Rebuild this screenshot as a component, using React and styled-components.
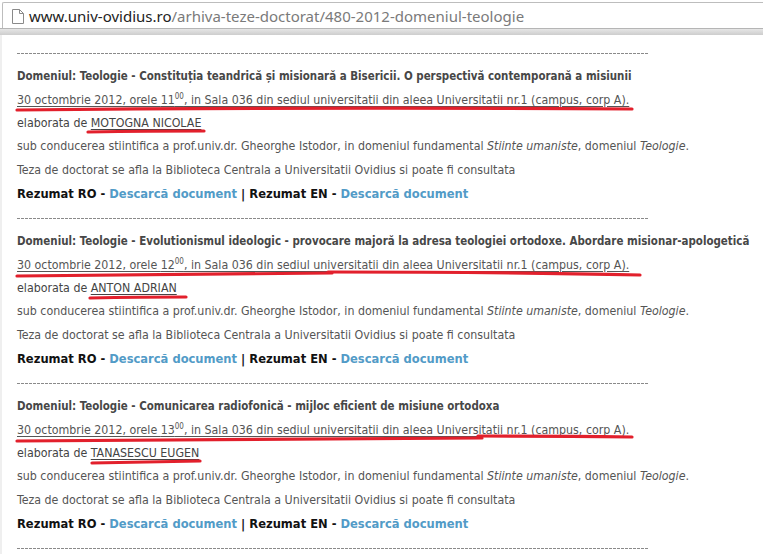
import React from "react";
import styled, { createGlobalStyle } from "styled-components";

const GlobalStyle = createGlobalStyle`
  html, body { margin: 0; padding: 0; background: #fff; }
  body { font-family: "DejaVu Sans", "Liberation Sans", sans-serif; }
`;

const Page = styled.div`
  width: 763px;
  height: 554px;
  overflow: hidden;
  background: #fff;
`;

const AddressBar = styled.div`
  height: 28px;
  padding: 2px 0 0 2px;
  box-sizing: border-box;
  background: #fff;
`;

const UrlBox = styled.div`
  height: 26px;
  border: 1px solid #bdbdbd;
  border-right: none;
  border-bottom: none;
  border-radius: 2px 0 0 0;
  display: flex;
  align-items: center;
  gap: 5px;
  padding-left: 9px;
  font-family: "Noto Sans", "Open Sans", sans-serif;
  font-size: 15px;
`;

const Host = styled.span`
  color: #222;
`;

const PathText = styled.span`
  color: #7a7a7a;
`;

const Band = styled.div`
  height: 6px;
  background: linear-gradient(#e6e6e6, #cdcdcd);
  border-top: 1px solid #b5b5b5;
`;

const Content = styled.div`
  padding: 6px 0 0 15px;
  border-left: 2px solid #efefef;
  font-family: "DejaVu Sans", sans-serif;
  font-stretch: condensed;
`;

const Divider = styled.div`
  height: 24px;
  display: flex;
  align-items: center;
  &::after {
    content: "";
    width: 632px;
    height: 1px;
    background: repeating-linear-gradient(90deg, #8a8a8a 0 3px, transparent 3px 4px);
  }
`;

const Line = styled.div`
  position: relative;
  height: ${(p) => p.$h || 23}px;
  line-height: ${(p) => p.$h || 23}px;
  font-size: ${(p) => p.$size || 12.3}px;
  font-weight: ${(p) => (p.$bold ? 700 : 400)};
  color: ${(p) => p.$color || "#4a4a4a"};
  white-space: nowrap;
`;

const Under = styled.span`
  text-decoration: underline;
  text-underline-offset: 2px;
`;

const Sup = styled.sup`
  font-size: 8px;
  line-height: 0;
`;

const Link = styled.span`
  color: #529bc7;
`;

const Mark = styled.svg`
  position: absolute;
  left: -17px;
  top: 0;
  width: 763px;
  height: 30px;
  overflow: visible;
  pointer-events: none;
`;

function RedMark({ d }) {
  return (
    <Mark viewBox="0 0 763 30">
      {d.map((path, i) => (
        <path key={i} d={path} stroke="#e2202c" strokeWidth="3.2" fill="none" strokeLinecap="round" />
      ))}
    </Mark>
  );
}

const entries = [
  {
    title:
      "Domeniul: Teologie - Constituția teandrică și misionară a Bisericii. O perspectivă contemporană a misiunii",
    hour: "11",
    name: "MOTOGNA NICOLAE",
    dateMark: ["M17 22 Q320 19 632 21"],
    nameMark: ["M88 20 Q150 19 204 19"],
  },
  {
    title:
      "Domeniul: Teologie - Evolutionismul ideologic - provocare majoră la adresa teologiei ortodoxe. Abordare misionar-apologetică",
    hour: "12",
    name: "ANTON ADRIAN",
    dateMark: ["M17 23 Q180 21 332 20", "M328 19 Q500 19 640 22"],
    nameMark: ["M90 21 Q140 20 186 20"],
  },
  {
    title:
      "Domeniul: Teologie - Comunicarea radiofonică - mijloc eficient de misiune ortodoxa",
    hour: "13",
    name: "TANASESCU EUGEN",
    dateMark: ["M17 23 Q250 21 482 20", "M478 18 Q560 18 632 19"],
    nameMark: ["M92 21 Q150 20 200 19"],
  },
];

function Entry({ e }) {
  return (
    <>
      <Divider />
      <Line $bold $size={11.45} $color="#474747">{e.title}</Line>
      <Line $h={24} $color="#555">
        <Under>
          30 octombrie 2012, orele {e.hour}
          <Sup>00</Sup>, in Sala 036 din sediul universitatii din aleea Universitatii nr.1 (campus, corp A).
        </Under>
        <RedMark d={e.dateMark} />
      </Line>
      <Line $color="#444">
        elaborata de <Under>{e.name}</Under>
        <RedMark d={e.nameMark} />
      </Line>
      <Line $color="#555">
        sub conducerea stiintifica a prof.univ.dr. Gheorghe Istodor, in domeniul fundamental <i>Stiinte umaniste</i>, domeniul <i>Teologie</i>.
      </Line>
      <Line $h={24} $color="#555">
        Teza de doctorat se afla la Biblioteca Centrala a Universitatii Ovidius si poate fi consultata
      </Line>
      <Line $h={24} $size={12.8} $bold $color="#111">
        Rezumat RO - <Link>Descarcă document</Link> | Rezumat EN - <Link>Descarcă document</Link>
      </Line>
    </>
  );
}

export default function App() {
  return (
    <Page>
      <GlobalStyle />
      <AddressBar>
        <UrlBox>
          <svg width="12" height="15" viewBox="0 0 12 15">
            <path d="M0.5 0.5 H7.5 L11.5 4.5 V14.5 H0.5 Z" fill="#fff" stroke="#8a8a8a" />
            <path d="M7.5 0.5 V4.5 H11.5" fill="none" stroke="#8a8a8a" />
          </svg>
          <span>
            <Host>www.univ-ovidius.ro</Host>
            <PathText>/arhiva-teze-doctorat/480-2012-domeniul-teologie</PathText>
          </span>
        </UrlBox>
      </AddressBar>
      <Band />
      <Content>
        {entries.map((e, i) => (
          <Entry key={i} e={e} />
        ))}
        <Divider />
      </Content>
    </Page>
  );
}
